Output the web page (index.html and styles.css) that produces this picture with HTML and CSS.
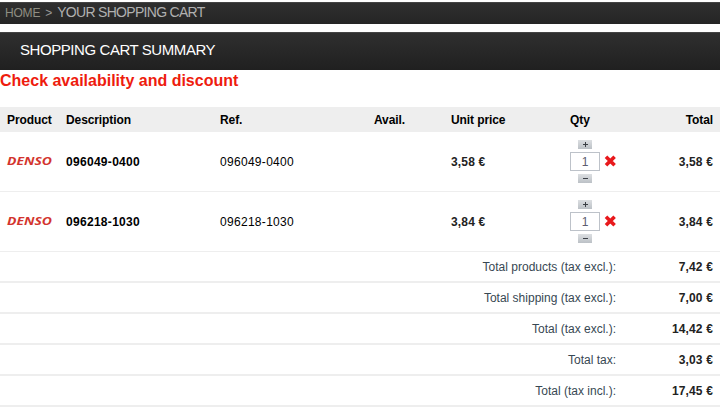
FILE: index.html
```html
<!doctype html>
<html lang="en">
  <head>
    <meta charset="utf-8">
    <title>Shopping cart</title>
    <link rel="stylesheet" href="styles.css">
  </head>
  <body>
    <main>
      <nav class="breadcrumb">
        <a href="#">HOME</a>
        <span class="pipe">&gt;</span>
        <span class="current">YOUR SHOPPING CART</span>
      </nav>

      <h1><span>SHOPPING CART SUMMARY</span></h1>
      <p class="notice"><span>Check availability and discount</span></p>

      <table class="cart">
        <colgroup>
          <col class="col-product">
          <col class="col-description">
          <col class="col-ref">
          <col class="col-avail">
          <col class="col-unit">
          <col class="col-qty">
          <col class="col-total">
        </colgroup>
        <thead>
          <tr>
            <th>Product</th>
            <th>Description</th>
            <th>Ref.</th>
            <th>Avail.</th>
            <th>Unit price</th>
            <th>Qty</th>
            <th class="right">Total</th>
          </tr>
        </thead>
        <tbody>
          <tr>
            <td>
              <svg class="brand" width="46" height="18" viewBox="0 0 46 18">
                <text x="0" y="12" textLength="45" lengthAdjust="spacingAndGlyphs">DENSO</text>
              </svg>
            </td>
            <td class="name">096049-0400</td>
            <td class="ref">096049-0400</td>
            <td></td>
            <td class="price">3,58 €</td>
            <td>
              <div class="qty">
                <div class="stepper">
                  <button type="button" class="step"><svg width="14" height="9"><path d="M5 4.5h5M7.5 2v5"/></svg></button>
                  <input type="text" value="1">
                  <button type="button" class="step"><svg width="14" height="9"><path d="M5 4.5h5"/></svg></button>
                </div>
                <svg class="delete" width="13" height="12" viewBox="0 0 13 12"><path d="M2 1.7l8.6 8.6M10.6 1.7l-8.6 8.6"/></svg>
              </div>
            </td>
            <td class="price right">3,58 €</td>
          </tr>
          <tr>
            <td>
              <svg class="brand" width="46" height="18" viewBox="0 0 46 18">
                <text x="0" y="12" textLength="45" lengthAdjust="spacingAndGlyphs">DENSO</text>
              </svg>
            </td>
            <td class="name">096218-1030</td>
            <td class="ref">096218-1030</td>
            <td></td>
            <td class="price">3,84 €</td>
            <td>
              <div class="qty">
                <div class="stepper">
                  <button type="button" class="step"><svg width="14" height="9"><path d="M5 4.5h5M7.5 2v5"/></svg></button>
                  <input type="text" value="1">
                  <button type="button" class="step"><svg width="14" height="9"><path d="M5 4.5h5"/></svg></button>
                </div>
                <svg class="delete" width="13" height="12" viewBox="0 0 13 12"><path d="M2 1.7l8.6 8.6M10.6 1.7l-8.6 8.6"/></svg>
              </div>
            </td>
            <td class="price right">3,84 €</td>
          </tr>
        </tbody>
        <tfoot>
          <tr>
            <td colspan="6">Total products (tax excl.):</td>
            <td class="price">7,42 €</td>
          </tr>
          <tr>
            <td colspan="6">Total shipping (tax excl.):</td>
            <td class="price">7,00 €</td>
          </tr>
          <tr>
            <td colspan="6">Total (tax excl.):</td>
            <td class="price">14,42 €</td>
          </tr>
          <tr>
            <td colspan="6">Total tax:</td>
            <td class="price">3,03 €</td>
          </tr>
          <tr>
            <td colspan="6">Total (tax incl.):</td>
            <td class="price">17,45 €</td>
          </tr>
        </tfoot>
      </table>
    </main>
  </body>
</html>
```

FILE: styles.css
```css
body {
  margin: 0;
  background: #fff;
  font-family: "Liberation Sans", Arial, sans-serif;
  font-size: 12px;
  color: #000;
}

main {
  width: 720px;
  padding-top: 2px;
}

.breadcrumb {
  display: flex;
  align-items: baseline;
  box-sizing: border-box;
  height: 22px;
  padding-left: 5px;
  border-top: 1px solid #444;
  background: linear-gradient(#2f2f2f, #252525);
  color: #999;
  line-height: 19px;
}

.breadcrumb a {
  color: #8f8f83;
  letter-spacing: -0.2px;
  text-decoration: none;
}

.breadcrumb .pipe {
  margin: 0 5px;
  font-size: 12px;
}

.breadcrumb .current {
  font-size: 14px;
  letter-spacing: -0.7px;
  color: #b0b0b0;
}

h1 {
  box-sizing: border-box;
  height: 38px;
  margin: 8px 0 0;
  padding-left: 20px;
  border-top: 1px solid #444;
  background: linear-gradient(#2f2f2f, #202020);
  color: #fff;
  font-size: 15px;
  font-weight: normal;
  letter-spacing: -0.43px;
  line-height: 34px;
}

.notice {
  height: 37px;
  margin: 0;
  color: #ee1c0e;
  font-size: 16px;
  font-weight: bold;
  line-height: 21px;
}

.cart {
  width: 720px;
  table-layout: fixed;
  border-collapse: separate;
  border-spacing: 0;
}

.col-product { width: 59px; }
.col-description { width: 154px; }
.col-ref { width: 154px; }
.col-avail { width: 77px; }
.col-unit { width: 119px; }
.col-qty { width: 60px; }
.col-total { width: 97px; }

.cart th,
.cart td {
  box-sizing: border-box;
  padding: 0 7px;
  text-align: left;
  white-space: nowrap;
}

.cart th {
  height: 25px;
  background: #eee;
  letter-spacing: -0.1px;
}

.cart tbody td {
  height: 60px;
  border-bottom: 1px solid #eee;
}

.cart tfoot td {
  height: 31px;
  padding-top: 1px;
  border-bottom: 2px solid #eee;
  color: #374853;
  text-align: right;
}

.cart .right {
  text-align: right;
}

.cart .price {
  color: #222;
  font-weight: bold;
  letter-spacing: 0.15px;
}

.name {
  font-weight: bold;
}

.name,
.ref {
  letter-spacing: 0.3px;
}

.brand {
  display: block;
  overflow: visible;
  fill: #d3342e;
  font-family: "Open Sans", sans-serif;
  font-size: 11px;
  font-style: italic;
  font-weight: bold;
}

.qty {
  display: flex;
  align-items: center;
  gap: 4px;
}

.stepper {
  display: flex;
  flex-direction: column;
  align-items: center;
  gap: 3px;
}

.stepper input {
  box-sizing: border-box;
  width: 30px;
  height: 19px;
  padding: 0;
  border: 1px solid #bdc2c9;
  color: #5d5d70;
  font: 12px "Liberation Sans", Arial, sans-serif;
  text-align: center;
}

.step {
  display: block;
  width: 14px;
  height: 9px;
  padding: 0;
  border: 0;
  background: linear-gradient(#dcdfe2, #bcc1c6);
}

.step svg {
  display: block;
  stroke: #3c4046;
}

.delete {
  flex: none;
  margin-bottom: 2px;
  stroke: #e8191c;
  stroke-width: 3.6;
}
```
